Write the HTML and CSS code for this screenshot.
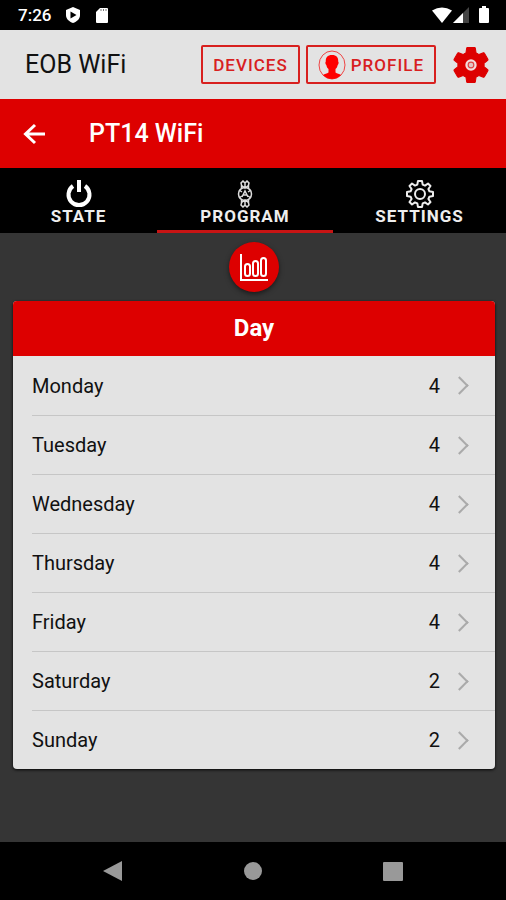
FILE: index.html
```html
<!DOCTYPE html>
<html lang="en">
<head>
  <meta charset="UTF-8">
  <meta name="viewport" content="width=device-width, initial-scale=1.0">
  <title>EOB WiFi</title>
  <link rel="stylesheet" href="styles.css">
</head>
<body>
  <div class="status-bar">
    <span class="clock">7:26</span>
    <svg class="status-icon" width="16" height="18" viewBox="0 0 16 18"><path fill="#fff" d="M8 1l7 3v5c0 4-3 6.500-7 8-4-1.500-7-4-7-8V4z"/><path d="M5.500 5.500v7L11.500 9z"/></svg>
    <svg class="status-icon" width="14" height="18" viewBox="0 0 14 18"><path fill="#fff" d="M5 2h7q1 0 1 1v13q0 1-1 1H2q-1 0-1-1V6z"/><path stroke="#777" d="M6 3v2M8.500 3v2M11 3v2"/></svg>
    <span class="spacer"></span>
    <svg width="20" height="18" viewBox="0 0 20 18"><path fill="#fff" d="M0 4.500Q10-1.500 20 4.500L10 17z"/></svg>
    <svg width="18" height="18" viewBox="0 0 18 18"><path fill="#444" d="M17 1v16H1z"/><path fill="#fff" d="M11 7v10H1z"/></svg>
    <svg class="battery" width="12" height="18" viewBox="0 0 12 18"><path fill="#fff" d="M4 0h4v2h2q1 0 1 1v13q0 1-1 1H2q-1 0-1-1V3q0-1 1-1h2z"/></svg>
  </div>

  <header class="toolbar">
    <h1>EOB WiFi</h1>
    <button type="button" class="btn-outline">DEVICES</button>
    <button type="button" class="btn-outline">
      <svg width="28" height="30" viewBox="0 0 28 30"><ellipse cx="14" cy="15" rx="13" ry="14" fill="none" stroke="#e44" stroke-width="1"/><path fill="#f00" d="M14 5c4.500 0 6.500 2.500 6.200 6.500.8.500.4 3-.5 3.500-.4 2-1 3-2.200 4v3.500c1.500 1 4 1.200 5.500 2.500-2.500 2.800-5.500 4-9 4s-6.500-1.200-9-4c1.500-1.300 4-1.500 5.500-2.500V19c-1.200-1-1.800-2-2.200-4-.9-.5-1.300-3-.5-3.500C7.500 7.500 9.500 5 14 5z"/></svg>
      PROFILE
    </button>
    <button type="button" class="btn-icon" aria-label="App settings">
      <svg width="42" height="42" viewBox="0 0 24 24"><path fill="#d00" stroke="#d00" stroke-width=".6" stroke-linejoin="round" d="M19.430 12.980c.04-.32.07-.64.07-.98s-.03-.66-.07-.98l2.110-1.650c.19-.15.24-.42.12-.64l-2-3.460c-.12-.22-.39-.3-.61-.22l-2.490 1c-.52-.4-1.080-.73-1.690-.98l-.38-2.650C14.460 2.180 14.250 2 14 2h-4c-.25 0-.46.18-.49.42l-.38 2.650c-.61.25-1.170.59-1.690.98l-2.490-1c-.23-.09-.49 0-.61.22l-2 3.460c-.13.22-.07.49.12.64l2.110 1.650c-.04.32-.07.65-.07.98s.03.66.07.98l-2.110 1.650c-.19.15-.24.42-.12.64l2 3.460c.12.22.39.3.61.22l2.490-1c.52.4 1.080.73 1.690.98l.38 2.650c.03.24.24.42.49.42h4c.25 0 .46-.18.49-.42l.38-2.650c.61-.25 1.170-.59 1.690-.98l2.490 1c.23.09.49 0 .61-.22l2-3.460c.12-.22.07-.49-.12-.64z"/><circle cx="12" cy="12" r="2.600" fill="#d44" stroke="#f3dede" stroke-width="1.300"/><circle cx="12" cy="12" r="1.300" fill="#e3c4c4"/></svg>
    </button>
  </header>

  <div class="title-bar">
    <a href="#" class="back" aria-label="Back">
      <svg width="24" height="22" viewBox="0 0 24 22"><path fill="none" stroke="#fff" stroke-width="3" d="M22 11H2M12 2l-9.500 9 9.500 9"/></svg>
    </a>
    <h2>PT14 WiFi</h2>
  </div>

  <nav class="tabs">
    <a href="#" class="tab">
      <svg width="28" height="28" viewBox="0 0 28 28"><path fill="none" stroke="#fff" stroke-width="4" d="M8 6a10.500 10.500 0 1 0 12 0"/><path stroke="#fff" stroke-width="4" d="M14 0v12"/></svg>
      STATE
    </a>
    <a href="#" class="tab active">
      <svg width="28" height="28" viewBox="0 0 28 28"><g fill="none" stroke="#ddd" stroke-width="1.500"><circle cx="14" cy="14" r="6.500"/><path d="M10.500 8V5l-.5-2 2-2 2 2 2-2 2 2-.5 2v3M10 5l4 3 4-3M14 3v5M10.500 20v3l-.5 2 2 2 2-2 2 2 2-2-.5-2v-3M10 23l4-3 4 3M14 25v-5M8 10l3 2M20 10l-3 2M8 18l3-2M20 18l-3-2"/><path d="M11 17l3-6 3 6M12 15h4"/></g></svg>
      PROGRAM
    </a>
    <a href="#" class="tab">
      <svg width="28" height="28" viewBox="0 0 28 28"><g fill="none" stroke="#eee" stroke-width="2" stroke-linejoin="round"><path d="M12 1h4l.7 3.600 2.300 1L22 3.500 24.500 6l-2.100 3 1 2.300L27 12v4l-3.600.7-1 2.300 2.100 3-2.500 2.500-3-2.100-2.300 1L16 27h-4l-.7-3.600-2.300-1-3 2.100L3.500 22l2.100-3-1-2.300L1 16v-4l3.600-.7 1-2.300-2.100-3L6 3.500l3 2.100 2.300-1z"/><circle cx="14" cy="14" r="5"/></g></svg>
      SETTINGS
    </a>
  </nav>

  <main>
    <button type="button" class="fab" aria-label="Chart">
      <svg width="30" height="30" viewBox="0 0 30 30"><g fill="none" stroke="#fff" stroke-width="2"><path d="M2 2v26h27"/><rect x="6" y="12" width="5" height="12" rx="2.500"/><rect x="14" y="9" width="5" height="15" rx="2.500"/><rect x="22" y="6" width="5" height="18" rx="2.500"/></g></svg>
    </button>

    <section class="card">
      <h3>Day</h3>
      <ul class="days">
        <li><a href="#"><span>Monday</span><span class="count">4</span></a></li>
        <li><a href="#"><span>Tuesday</span><span class="count">4</span></a></li>
        <li><a href="#"><span>Wednesday</span><span class="count">4</span></a></li>
        <li><a href="#"><span>Thursday</span><span class="count">4</span></a></li>
        <li><a href="#"><span>Friday</span><span class="count">4</span></a></li>
        <li><a href="#"><span>Saturday</span><span class="count">2</span></a></li>
        <li><a href="#"><span>Sunday</span><span class="count">2</span></a></li>
      </ul>
    </section>
  </main>

  <div class="nav-bar">
    <button type="button" aria-label="Back"><svg width="22" height="22" viewBox="0 0 22 22"><path fill="#999" d="M20 1v20L1 11z"/></svg></button>
    <button type="button" aria-label="Home"><svg width="22" height="22" viewBox="0 0 22 22"><circle cx="11" cy="11" r="9" fill="#999"/></svg></button>
    <button type="button" aria-label="Recent apps"><svg width="22" height="22" viewBox="0 0 22 22"><rect x="1" y="2" width="20" height="19" rx="1" fill="#999"/></svg></button>
  </div>
</body>
</html>
```

FILE: styles.css
```css
* {
  box-sizing: border-box;
}
body {
  margin: 0;
  min-height: 100vh;
  display: flex;
  flex-direction: column;
  background-color: #353535;
  font-family: Roboto, "Liberation Sans", sans-serif;
  color: #111;
}
h1, h2, h3, ul {
  margin: 0;
  padding: 0;
}
a {
  color: inherit;
  text-decoration: none;
}
button {
  font-family: inherit;
  padding: 0;
  border: none;
  background: none;
  cursor: pointer;
}
svg {
  display: block;
  flex-shrink: 0;
}

/* system status bar */
.status-bar {
  height: 30px;
  padding: 0 16px 0 18px;
  display: flex;
  align-items: center;
  background-color: #000;
  color: #fff;
}
.clock {
  font-size: 17px;
  font-weight: 500;
}
.status-icon {
  margin-left: 14px;
}
.spacer {
  flex: 1;
}
.battery {
  margin-left: 8px;
}

/* app header */
.toolbar {
  height: 69px;
  padding: 0 14px 0 25px;
  display: flex;
  align-items: center;
  gap: 6px;
  background-color: #e3e3e3;
}
.toolbar h1 {
  flex: 1;
  font-size: 25px;
  font-weight: 400;
}
.btn-outline {
  height: 39px;
  padding: 0 10px;
  display: flex;
  align-items: center;
  gap: 5px;
  border: 2px solid #d8201f;
  border-radius: 2px;
  color: #d8201f;
  font-size: 17px;
  font-weight: 500;
  letter-spacing: 1px;
}
.btn-icon {
  margin-left: 8px;
}

.title-bar {
  height: 69px;
  padding: 0 23px;
  display: flex;
  align-items: center;
  gap: 42px;
  background-color: #d00;
  color: #fff;
}
.title-bar h2 {
  font-size: 25px;
  font-weight: 500;
}

.tabs {
  height: 65px;
  display: grid;
  grid-template-columns: 157fr 176fr 173fr;
  background-color: #000;
  color: #eee;
}
.tab {
  padding-top: 12px;
  display: flex;
  flex-direction: column;
  align-items: center;
  border-bottom: 3px solid transparent;
  font-size: 17px;
  font-weight: 700;
  line-height: 16px;
  letter-spacing: 1px;
}
.tab.active {
  border-color: #c81414;
}

main {
  flex: 1;
  padding: 9px 11px 0 13px;
}
.fab {
  width: 50px;
  height: 50px;
  margin: 0 auto 9px;
  display: flex;
  align-items: center;
  justify-content: center;
  border-radius: 50%;
  background-color: #d00;
  box-shadow: 0 2px 5px rgba(0,0,0,0.5);
}
.card {
  border-radius: 4px;
  overflow: hidden;
  background-color: #e3e3e3;
  box-shadow: 0 1px 3px rgba(0,0,0,0.9);
}
.card h3 {
  background-color: #d00;
  color: #fff;
  font-size: 24px;
  font-weight: 700;
  line-height: 55px;
  text-align: center;
}
.days {
  padding-left: 19px;
  list-style: none;
}
.days li + li {
  border-top: 1px solid #c6c6c6;
}
.days a {
  height: 58px;
  padding-right: 29px;
  display: flex;
  align-items: center;
  font-size: 20px;
}
.days li:first-child a {
  height: 59px;
}
.count {
  margin-left: auto;
}
.days a::after {
  content: "";
  width: 11px;
  height: 11px;
  margin-left: 13px;
  border: solid #aaa;
  border-width: 2px 2px 0 0;
  transform: rotate(45deg);
}

/* system navigation */
.nav-bar {
  height: 58px;
  padding: 0 102px;
  display: flex;
  align-items: center;
  justify-content: space-between;
  background-color: #000;
}
```
